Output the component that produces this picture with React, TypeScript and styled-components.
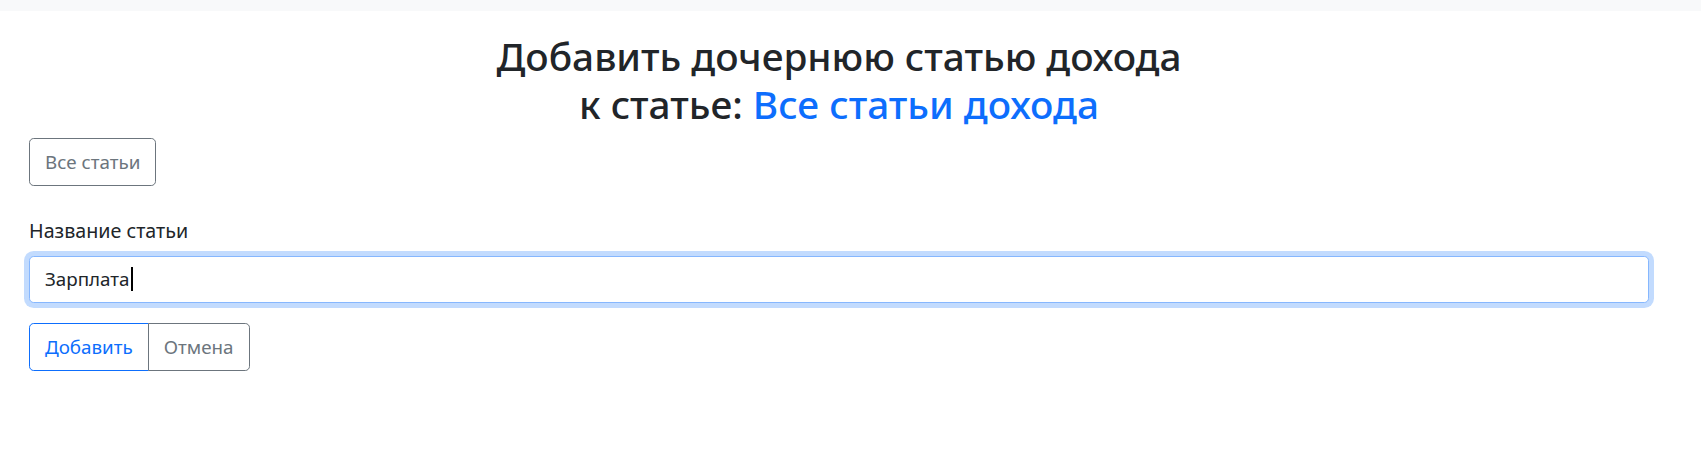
import React from 'react';
import styled, { createGlobalStyle } from 'styled-components';

const GlobalStyle = createGlobalStyle`
  html, body {
    margin: 0;
    padding: 0;
    background: #ffffff;
  }
  body {
    font-family: "Noto Sans", "Open Sans", sans-serif;
    font-size: 20px;
    line-height: 30px;
    color: #212529;
  }
`;

const TopBar = styled.div`
  height: 11px;
  background-color: #f8f9fa;
`;

const Page = styled.main`
  padding: 21px 52px 0 29px;
`;

const Title = styled.h2`
  margin: 0 0 10px;
  text-align: center;
  font-size: 38.8px;
  font-weight: 500;
  line-height: 48px;
  color: #212529;
`;

const TitleLink = styled.a`
  color: #0d6efd;
  text-decoration: none;
`;

const Button = styled.button<{ $variant?: 'primary' | 'secondary' }>`
  position: relative;
  display: inline-block;
  box-sizing: border-box;
  height: 47.5px;
  padding: 7.5px 15px;
  font-family: inherit;
  font-size: 18.8px;
  line-height: 30px;
  font-weight: 400;
  background: #fff;
  border: 1px solid ${({ $variant }) => ($variant === 'primary' ? '#0d6efd' : '#6c757d')};
  color: ${({ $variant }) => ($variant === 'primary' ? '#0d6efd' : '#6c757d')};
  border-radius: 4.7px;
  cursor: pointer;
`;

const BackRow = styled.div`
  margin-bottom: 30px;
`;

const Field = styled.div`
  margin-bottom: 20px;
`;

const Label = styled.label`
  display: block;
  margin-bottom: 10px;
  font-size: 19.7px;
`;

const TextBox = styled.div`
  box-sizing: border-box;
  display: flex;
  align-items: center;
  height: 47.5px;
  padding: 7.5px 15px;
  font-size: 18.8px;
  border: 1px solid #86b7fe;
  border-radius: 4.7px;
  box-shadow: 0 0 0 5px rgba(13, 110, 253, 0.25);
  background: #fff;
  color: #212529;
`;

const Caret = styled.span`
  display: inline-block;
  width: 2px;
  height: 24px;
  margin-left: 1px;
  background: #000;
`;

const Group = styled.div`
  display: inline-flex;

  & > ${Button}:first-child {
    border-top-right-radius: 0;
    border-bottom-right-radius: 0;
  }
  & > ${Button}:last-child {
    margin-left: -1px;
    border-top-left-radius: 0;
    border-bottom-left-radius: 0;
  }
`;

export default function App() {
  return (
    <>
      <GlobalStyle />
      <TopBar />
      <Page>
        <Title>
          Добавить дочернюю статью дохода
          <br />
          к статье: <TitleLink href="#">Все статьи дохода</TitleLink>
        </Title>
        <BackRow>
          <Button $variant="secondary">Все статьи</Button>
        </BackRow>
        <Field>
          <Label>Название статьи</Label>
          <TextBox role="textbox">
            Зарплата
            <Caret />
          </TextBox>
        </Field>
        <Group>
          <Button $variant="primary">Добавить</Button>
          <Button $variant="secondary">Отмена</Button>
        </Group>
      </Page>
    </>
  );
}
